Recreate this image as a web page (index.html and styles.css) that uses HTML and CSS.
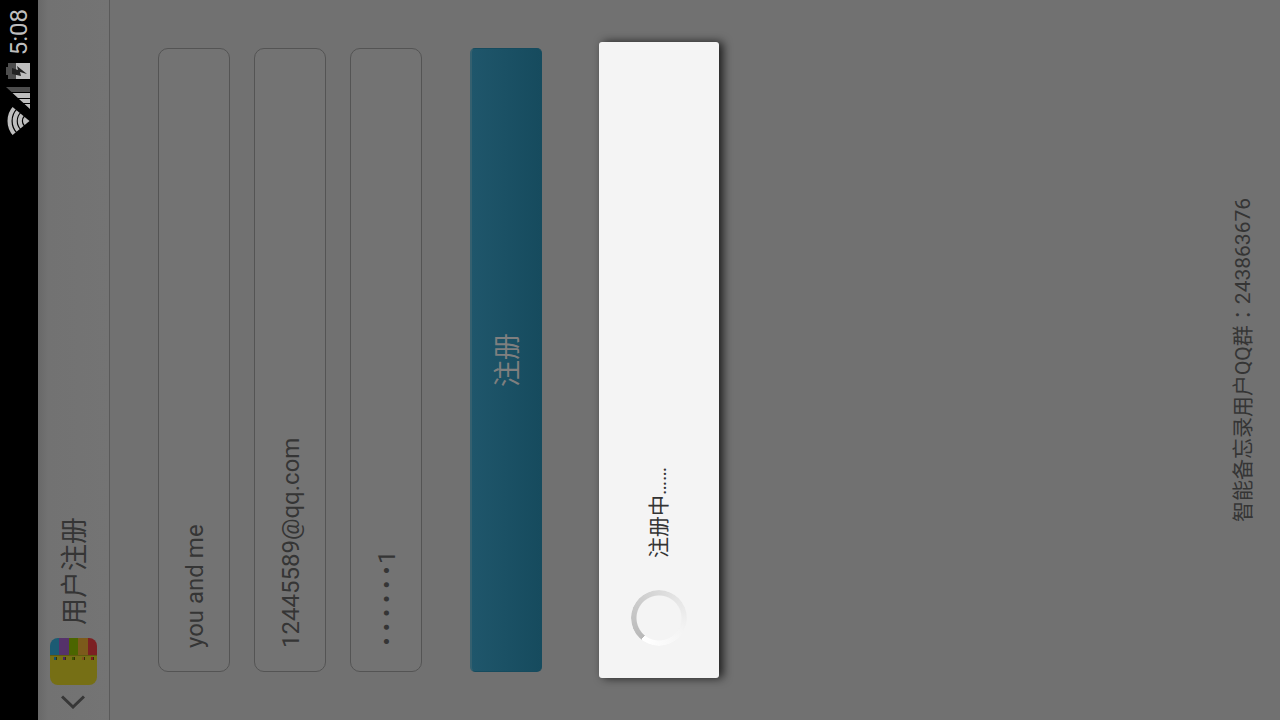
FILE: index.html
```html
<!DOCTYPE html>
<html lang="zh-CN">
<head>
<meta charset="utf-8">
<title>用户注册</title>
<link rel="stylesheet" href="styles.css">
</head>
<body>
<div class="screen">
  <div class="status-bar">
    <svg class="radio-icons" width="50" height="24" viewBox="0 0 50 24" aria-hidden="true">
      <clipPath id="fan"><path d="M15 23.500L-2 3V-2H32V3Z"/></clipPath>
      <g clip-path="url(#fan)" fill="none" stroke="#bebebe" stroke-width="4">
        <circle cx="15" cy="23.500" r="20"/>
        <circle cx="15" cy="23.500" r="14.800"/>
        <circle cx="15" cy="23.500" r="9.700"/>
        <circle cx="15" cy="23.500" r="6.500" fill="#bebebe" stroke="none"/>
      </g>
      <path d="M49 0V24H44V5.500Z" fill="#4d4d4d"/>
      <path d="M43 6.500V24H38V12ZM37 13V24H33V17.500ZM32 18.500V24H27Z" fill="#bebebe"/>
    </svg>
    <svg class="battery" width="16" height="24" viewBox="0 0 16 24" aria-hidden="true">
      <path d="M4 0H12V2H16V10H0V2H4Z" fill="#4d4d4d"/>
      <path d="M0 10H16V24H0Z" fill="#bebebe"/>
      <path d="M5 6H11L9 12L13 11L5 21L7 14L3 15Z" fill="#222"/>
    </svg>
    <time>5:08</time>
  </div>
  <header class="app-bar">
    <button class="back" type="button" aria-label="返回">
      <svg width="14" height="24" viewBox="0 0 14 24" aria-hidden="true"><path d="M12.500 1L2 12L12.500 23" fill="none" stroke="#373737" stroke-width="3"/></svg>
    </button>
    <svg class="logo" width="47" height="47" viewBox="0 0 47 47" aria-hidden="true">
      <clipPath id="tile"><rect width="47" height="47" rx="8"/></clipPath>
      <g clip-path="url(#tile)">
        <path d="M0 0H30V47H0Z" fill="#766f15"/>
        <path d="M30 0H47V9H30Z" fill="#1b5b73"/>
        <path d="M30 9H47V19H30Z" fill="#55326a"/>
        <path d="M30 19H47V28H30Z" fill="#4b6500"/>
        <path d="M30 28H47V38H30Z" fill="#7c5a1b"/>
        <path d="M30 38H47V47H30Z" fill="#7c2023"/>
        <path d="M29 0H30V47H29Z" fill="#5f5a10"/>
        <path d="M25 4H28V6H25Z" fill="#15566c"/>
        <path d="M25 13H28V15H25Z" fill="#4a2860"/>
        <path d="M25 22H28V24H25Z" fill="#405800"/>
        <path d="M25 32H28V34H25Z" fill="#80501b"/>
        <path d="M25 41H28V43H25Z" fill="#801c20"/>
        <path d="M25 6H28V7H25ZM25 15H28V16H25ZM25 24H28V25H25ZM25 34H28V35H25ZM25 43H28V44H25Z" fill="#343008"/>
      </g>
    </svg>
    <h1>用户注册</h1>
  </header>
  <main>
    <form class="form">
      <input class="field" type="text" aria-label="用户名" value="you and me">
      <input class="field" type="text" aria-label="邮箱" value="12445589@qq.com">
      <input class="field" type="text" aria-label="密码" value="&#x200A;•&#x2005;•&#x2005;•&#x2005;•&#x2005;•&#x2005;•&#x200A;1">
      <button class="submit" type="button">注册</button>
    </form>
    <p class="note">智能备忘录用户QQ群<span class="colon" lang="zh-TW">：</span>243863676</p>
    <div class="overlay">
      <div class="dialog" role="dialog" aria-label="注册中">
        <div class="spinner"></div>
        <p>注册中……</p>
      </div>
    </div>
  </main>
</div>
</body>
</html>
```

FILE: styles.css
```css
* { box-sizing: border-box; }

html {
  height: 100%;
  overflow: hidden;
}

body {
  display: flex;
  align-items: flex-end;
  margin: 0;
  height: 100%;
  overflow: hidden;
  background: #707070;
}

/* Portrait screen shown turned a quarter to the left */
.screen {
  display: flex;
  flex: none;
  flex-direction: column;
  width: 100vh;
  height: 100vw;
  transform: translateX(100vw) rotate(-90deg);
  transform-origin: 0 100%;
  background: #717171;
  color: #353535;
  font-family: Roboto, "Noto Sans CJK SC", sans-serif;
}

button, input { font: inherit; color: inherit; }
p, h1 { margin: 0; font-weight: 400; }
svg { display: block; }

.status-bar {
  display: flex;
  align-items: center;
  justify-content: flex-end;
  height: 38px;
  padding: 0 9px;
  background: #000;
  color: #bebebe;
  font-size: 24px;
  line-height: 40px;
}

.status-bar svg { margin-bottom: 2px; }
.battery { margin: 0 8px 0 7px; }

.app-bar {
  display: flex;
  align-items: center;
  height: 72px;
  padding-left: 11px;
  background: linear-gradient(#686868, #727272 10px, #747474);
  border-bottom: 1px solid #5a5a5a;
}

.back {
  margin-right: 10px;
  padding: 0 0 2px;
  border: 0;
  background: none;
}

.logo { margin-right: 13px; }

h1 {
  padding-top: 2px;
  font-size: 27px;
  line-height: 40px;
}

main {
  position: relative;
  display: flex;
  flex: 1;
  flex-direction: column;
  justify-content: space-between;
}

.form {
  display: flex;
  flex-direction: column;
  gap: 24px;
  padding: 48px;
}

.field {
  width: 100%;
  height: 72px;
  padding: 2px 23px 0;
  border: 1px solid #545454;
  border-radius: 10px;
  background: #737373;
  font-size: 24px;
}

.submit {
  height: 72px;
  margin-top: 24px;
  padding: 0 0 2px;
  border: 1px solid #164b5e;
  border-top: 2px solid #35606f;
  border-radius: 5px;
  background: linear-gradient(#1f566b, #164b5e);
  color: #7f7f7f;
  font-size: 27px;
}

.note {
  padding-bottom: 21px;
  text-align: center;
  font-size: 21px;
  line-height: 32px;
}

.colon { font-family: "Noto Sans CJK TC", sans-serif; }

.overlay {
  position: absolute;
  inset: -72px 0 0;
  display: flex;
  align-items: center;
  padding: 0 42px;
}

.dialog {
  display: flex;
  flex: 1;
  align-items: center;
  gap: 32px;
  padding: 32px;
  border-radius: 3px;
  background: #f4f4f4;
  box-shadow: 0 4px 10px rgba(0, 0, 0, .75);
  color: #333;
  font-size: 21px;
  line-height: 32px;
}

.spinner {
  width: 56px;
  height: 56px;
  border-radius: 50%;
  background: conic-gradient(from 309deg, #b8b8b8, #cccccc 90deg, #e4e4e4 180deg, #f4f4f4 260deg, #ffffff 350deg, #ffffff);
  mask: radial-gradient(circle, transparent 22px, #000 23px);
}
```
